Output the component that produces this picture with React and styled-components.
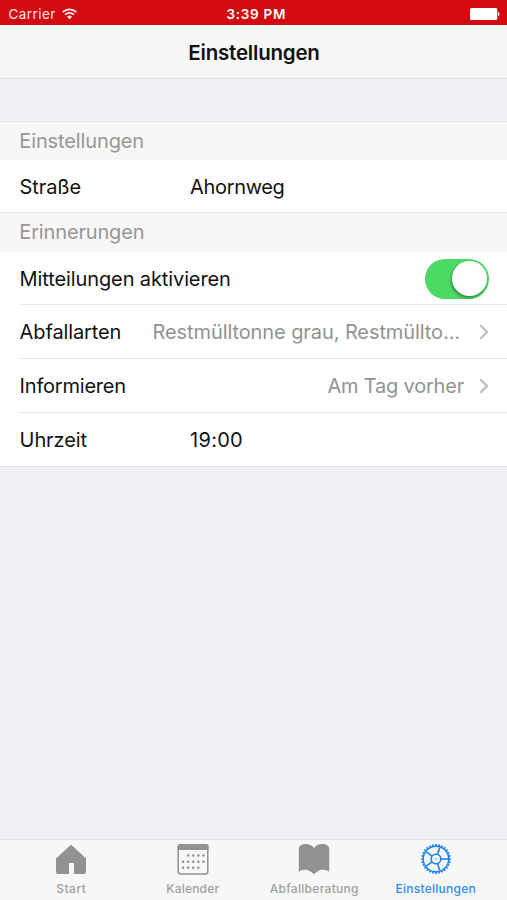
import React from "react";
import styled, { createGlobalStyle } from "styled-components";

const GlobalStyle = createGlobalStyle`
  * { box-sizing: border-box; }

  body {
    margin: 0;
    font-family: Inter, "Liberation Sans", sans-serif;
    color: #111;
  }
`;

const Screen = styled.div`
  display: flex;
  flex-direction: column;
  width: 507px;
  height: 900px;
  overflow: hidden;
  background: #efeff4;
`;

const StatusBar = styled.div`
  display: grid;
  grid-template-columns: 1fr auto 1fr;
  align-items: center;
  flex: none;
  height: 25px;
  padding: 2px 7px 0 8.5px;
  background: #d20a11;
  color: #fde4e4;
  font-size: 13.5px;
  line-height: 22px;
`;

const Carrier = styled.div`
  display: flex;
  align-items: center;
  gap: 6px;
  letter-spacing: 0.45px;
`;

const Clock = styled.div`
  padding-left: 4px;
  color: #fff;
  font-size: 13.5px;
  font-weight: 600;
  letter-spacing: 0.7px;
`;

const Battery = styled.div`
  display: flex;
  justify-content: flex-end;
`;

const NavBar = styled.div`
  flex: none;
  height: 54px;
  border-bottom: 1px solid #e2e2e5;
  background: #f7f7f7;
  text-align: center;
`;

const NavTitle = styled.h1`
  margin: 0;
  padding-left: 1px;
  font-size: 20.5px;
  font-weight: 600;
  letter-spacing: -0.2px;
  line-height: 55px;
`;

const Content = styled.div`
  flex: 1;
  padding-top: 42px;
`;

const SectionHeader = styled.h2`
  height: ${props => props.$height}px;
  margin: 0;
  padding-left: 19.3px;
  border-top: 1px solid #e5e5e8;
  background: #f7f7f7;
  color: #969696;
  font-size: 20px;
  font-weight: 400;
  letter-spacing: ${props => props.$spacing}px;
  line-height: 38px;
`;

const List = styled.div`
  padding-left: 20px;
  border-bottom: ${props => (props.$closed ? 1 : 0)}px solid #e2e2e6;
  background: #fff;
`;

const Row = styled.div`
  display: flex;
  align-items: center;
  height: ${props => props.$height || 54}px;
  padding-top: ${props => props.$offset || 0}px;
  padding-right: 18px;
  border-bottom: ${props => (props.$last ? 0 : 1)}px solid #e6e6e8;
  font-size: 20px;
  line-height: 24px;
`;

const Label = styled.div`
  flex: none;
  width: ${props => (props.$fixed ? "170.5px" : "auto")};
  margin-left: -0.4px;
  letter-spacing: ${props => props.$spacing || 0}px;
`;

const Value = styled.div`
  letter-spacing: ${props => props.$spacing || 0}px;
`;

const Detail = styled.div`
  flex: 1;
  margin-right: ${props => props.$gap}px;
  color: #929292;
  letter-spacing: ${props => props.$spacing || 0}px;
  text-align: right;
  white-space: nowrap;
`;

const Switch = styled.button`
  display: flex;
  justify-content: flex-end;
  width: 64px;
  height: 40px;
  margin-left: auto;
  padding: 2px;
  border: 0;
  border-radius: 20px;
  background: #4cd964;
`;

const Knob = styled.span`
  width: 35px;
  height: 35px;
  border-radius: 50%;
  background: #fff;
  box-shadow: -1px 2px 3px rgba(0, 0, 0, 0.35);
`;

const TabBar = styled.div`
  display: grid;
  grid-template-columns: repeat(4, 1fr);
  flex: none;
  height: 61px;
  padding: 0 10.5px;
  border-top: 1px solid #e2e2e6;
  background: #f7f7f7;
`;

const Tab = styled.div`
  display: flex;
  flex-direction: column;
  align-items: center;
  padding-top: 3px;
  color: ${props => (props.$active ? "#1a82f0" : "#929292")};
`;

const TabLabel = styled.span`
  margin-top: 7px;
  color: ${props => (props.$active ? "#2b8cf4" : "#a0a0a0")};
  font-size: 12px;
  font-weight: 500;
  letter-spacing: ${props => props.$spacing}px;
  line-height: 14px;
`;

const WifiIcon = () =>
  <svg width="15" height="12" viewBox="0 0 15 12" fill="none" stroke="currentColor" strokeWidth="1.8">
    <path d="M.7 4.1a9.6 9.6 0 0 1 13.6 0" />
    <path d="M3 6.7a6.4 6.4 0 0 1 9 0" />
    <path d="M7.5 11.3 4.9 8.8a3.7 3.7 0 0 1 5.2 0Z" fill="currentColor" stroke="none" />
  </svg>;

const BatteryIcon = () =>
  <svg width="30" height="12" viewBox="0 0 30 12" fill="#fff">
    <rect x="0" y="0" width="27.3" height="12" rx="1.5" />
    <path d="M28 4c2 .7 2 3.3 0 4Z" />
  </svg>;

const Chevron = () =>
  <svg width="10" height="16" viewBox="0 0 10 16" fill="none" stroke="#c2c2c6" strokeWidth="2.4">
    <path d="m1.2 1.2 6.800 6.800-6.800 6.800" />
  </svg>;

const HomeIcon = () =>
  <svg width="32" height="32" viewBox="0 0 32 32" fill="currentColor">
    <path d="M15 2.500q1-.9 2 0L31 15.500V29q0 2-2 2H19V20h-5v11H3q-2 0-2-2V15.500Z" />
  </svg>;

const calendarDots = [[11.2, 12.5, 4], [6, 18.7, 5], [6, 24.8, 4]];

const CalendarIcon = () =>
  <svg width="32" height="32" viewBox="0 0 32 32" fill="currentColor">
    <rect x="1.2" y="1.8" width="29.6" height="29.3" rx="2.5" fill="none" stroke="currentColor" strokeWidth="1.5" />
    <path d="M.5 7V3.500Q.5 1 3 1h26q2.500 0 2.500 2.500V7Z" />
    {calendarDots.map(([x, y, count]) =>
      Array.from({ length: count }, (_, i) =>
        <circle key={`${y}-${i}`} cx={x + i * 5.1} cy={y} r="1.25" />
      )
    )}
  </svg>;

const BookIcon = () =>
  <svg width="32" height="32" viewBox="0 0 32 32" fill="currentColor">
    <path d="M.8 5C1.800 0 12.500-.8 16 5 19.500-.8 30.200 0 31.200 5v24c-2.600-2.800-8.700-2.800-11.700-.5L16 31l-3.500-2.500C9.500 26.200 3.400 26.200.8 29Z" />
  </svg>;

const spokes = [0, 72, 144, 216, 288];
const teeth = Array.from({ length: 28 }, (_, i) => i * (360 / 28));

const GearIcon = () =>
  <svg width="32" height="32" viewBox="0 0 32 32" fill="none" stroke="currentColor">
    <circle cx="16" cy="16" r="12.8" strokeWidth="1.5" />
    <circle cx="16" cy="16" r="4.8" strokeWidth="1.5" />
    <circle cx="16" cy="16" r=".7" fill="currentColor" stroke="none" />
    {spokes.map(angle =>
      <path key={angle} d="M21 16h7" strokeWidth="1.6" transform={`rotate(${angle} 16 16)`} />
    )}
    {teeth.map(angle =>
      <path key={angle} d="M29 16h1.900" strokeWidth="1.6" transform={`rotate(${angle} 16 16)`} />
    )}
  </svg>;

const tabs = [
  { label: "Start", icon: HomeIcon, spacing: 0.5 },
  { label: "Kalender", icon: CalendarIcon, spacing: 0.2 },
  { label: "Abfallberatung", icon: BookIcon, spacing: 0.3 },
  { label: "Einstellungen", icon: GearIcon, spacing: 0.25, active: true }
];

const App = () => {
  return (
    <Screen>
      <GlobalStyle />
      <StatusBar>
        <Carrier>
          Carrier <WifiIcon />
        </Carrier>
        <Clock>3:39 PM</Clock>
        <Battery>
          <BatteryIcon />
        </Battery>
      </StatusBar>
      <NavBar>
        <NavTitle>Einstellungen</NavTitle>
      </NavBar>
      <Content>
        <SectionHeader $height={39} $spacing={-0.12}>Einstellungen</SectionHeader>
        <List>
          <Row $height={52} $offset={2} $last>
            <Label $fixed $spacing={-0.1}>Straße</Label>
            <Value $spacing={-0.35}>Ahornweg</Value>
          </Row>
        </List>
        <SectionHeader $height={40} $spacing={-0.15}>Erinnerungen</SectionHeader>
        <List $closed>
          <Row $height={53} $offset={2}>
            <Label $spacing={-0.11}>Mitteilungen aktivieren</Label>
            <Switch type="button" role="switch" aria-checked="true" aria-label="Mitteilungen aktivieren">
              <Knob />
            </Switch>
          </Row>
          <Row $offset={1}>
            <Label $spacing={-0.12}>Abfallarten</Label>
            <Detail $gap={19} $spacing={-0.09}>Restmülltonne grau, Restmüllto...</Detail>
            <Chevron />
          </Row>
          <Row>
            <Label $spacing={-0.2}>Informieren</Label>
            <Detail $gap={15} $spacing={-0.2}>Am Tag vorher</Detail>
            <Chevron />
          </Row>
          <Row $height={53} $offset={1} $last>
            <Label $fixed $spacing={-0.1}>Uhrzeit</Label>
            <Value $spacing={0.25}>19:00</Value>
          </Row>
        </List>
      </Content>
      <TabBar>
        {tabs.map(({ label, icon: Icon, spacing, active }) =>
          <Tab key={label} $active={active}>
            <Icon />
            <TabLabel $active={active} $spacing={spacing}>{label}</TabLabel>
          </Tab>
        )}
      </TabBar>
    </Screen>
  );
};

export default App;
